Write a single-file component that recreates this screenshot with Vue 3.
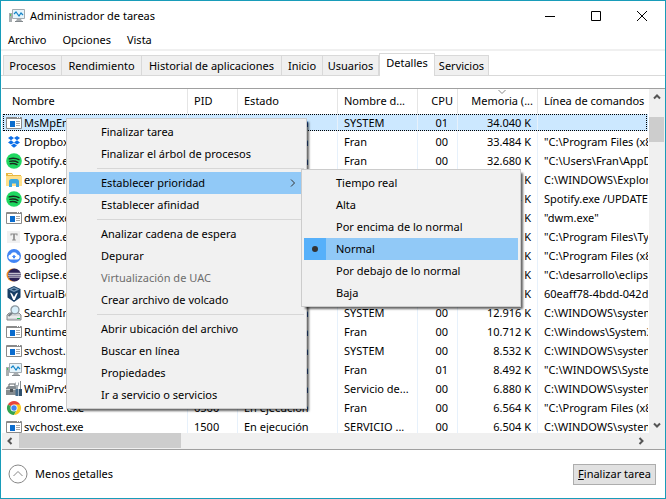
<script setup>
import { ref } from 'vue'

const tabs = ['Procesos', 'Rendimiento', 'Historial de aplicaciones', 'Inicio', 'Usuarios', 'Detalles', 'Servicios']
const activeTab = ref('Detalles')
const selected = ref(0)
const priority = ref('Normal')

const rows = [
  ['app', 'MsMpEng.exe', '2680', 'SYSTEM', '01', '34.040 K', ''],
  ['dropbox', 'Dropbox.exe', '7012', 'Fran', '00', '33.484 K', '"C:\\Program Files (x86)\\Dropbox'],
  ['spotify', 'Spotify.exe', '8124', 'Fran', '00', '32.680 K', '"C:\\Users\\Fran\\AppData\\Roaming'],
  ['folder', 'explorer.exe', '4460', 'Fran', '00', '30.120 K', 'C:\\WINDOWS\\Explorer.EXE'],
  ['spotify', 'Spotify.exe', '8316', 'Fran', '00', '27.944 K', 'Spotify.exe /UPDATE:1234'],
  ['app', 'dwm.exe', '1012', 'DWM-1', '00', '25.316 K', '"dwm.exe"'],
  ['typora', 'Typora.exe', '9240', 'Fran', '00', '22.508 K', '"C:\\Program Files\\Typora\\Typora'],
  ['drive', 'googledrivesync.exe', '7388', 'Fran', '00', '19.872 K', '"C:\\Program Files (x86)\\Google'],
  ['eclipse', 'eclipse.exe', '9904', 'Fran', '00', '17.260 K', '"C:\\desarrollo\\eclipse\\eclipse'],
  ['vbox', 'VirtualBox.exe', '9532', 'Fran', '00', '14.732 K', '60eaff78-4bdd-042d-2e72'],
  ['search', 'SearchIndexer.exe', '5216', 'SYSTEM', '00', '12.916 K', 'C:\\WINDOWS\\system32\\Search'],
  ['app', 'RuntimeBroker.exe', '4728', 'Fran', '00', '10.712 K', 'C:\\Windows\\System32\\Runtime'],
  ['app', 'svchost.exe', '1116', 'SYSTEM', '00', '8.532 K', 'C:\\WINDOWS\\system32\\svchost'],
  ['monitor', 'Taskmgr.exe', '6644', 'Fran', '01', '8.492 K', '"C:\\WINDOWS\\System32\\Taskmgr'],
  ['wmi', 'WmiPrvSE.exe', '3304', 'Servicio de...', '00', '6.880 K', 'C:\\WINDOWS\\system32\\wbem'],
  ['chrome', 'chrome.exe', '6560', 'Fran', '00', '6.564 K', '"C:\\Program Files (x86)\\Google'],
  ['app', 'svchost.exe', '1500', 'SERVICIO ...', '00', '6.504 K', 'C:\\WINDOWS\\system32\\svchost'],
].map(([icon, name, pid, user, cpu, memory, command]) => ({ icon, name, pid, user, cpu, memory, command }))

const menuGroups = [
  [{ label: 'Finalizar tarea' }, { label: 'Finalizar el árbol de procesos' }],
  [{ label: 'Establecer prioridad', open: true }, { label: 'Establecer afinidad' }],
  [
    { label: 'Analizar cadena de espera' },
    { label: 'Depurar' },
    { label: 'Virtualización de UAC', disabled: true },
    { label: 'Crear archivo de volcado' },
  ],
  [
    { label: 'Abrir ubicación del archivo' },
    { label: 'Buscar en línea' },
    { label: 'Propiedades' },
    { label: 'Ir a servicio o servicios' },
  ],
]
const priorities = ['Tiempo real', 'Alta', 'Por encima de lo normal', 'Normal', 'Por debajo de lo normal', 'Baja']
</script>

<template>
  <div class="window">
    <svg class="sprite" aria-hidden="true">
      <symbol id="i-app" viewBox="0 0 16 16">
        <path d="M.5 2.500h15v11H.5z" fill="#fff" stroke="#8a8a8a" />
        <path d="M1 2h14v2H1z" fill="#8a8a8a" />
        <path d="M11 2h1v1h-1zM13 2h1v1h-1z" fill="#fff" />
        <path d="M4 6h5v6H4z" fill="#0a6cce" />
        <path d="M10 6h4v1h-4zM10 8h4v1h-4zM10 10h4v1h-4z" fill="#a9a9a9" />
      </symbol>
      <symbol id="i-dropbox" viewBox="0 0 16 16">
        <path d="M5 2 8 4.100 5 6.300 2 4.100zM11 2l3 2.100-3 2.200-3-2.200zM5 6.300l3 2.100-3 2.200-3-2.200zM11 6.300l3 2.100-3 2.200-3-2.200zM5 11.500l3-2.100 3 2.100-3 2.200z" fill="#0c6ee8" />
      </symbol>
      <symbol id="i-spotify" viewBox="0 0 16 16">
        <circle cx="8" cy="8" r="7.800" fill="#1ed760" />
        <path d="M3.200 5.800c3.400-1 7-.7 9.800.9M3.800 8.400c2.900-.8 5.700-.5 8.100.9M4.300 10.800c2.400-.6 4.700-.3 6.700.8" fill="none" stroke="#182b1e" stroke-width="1.400" stroke-linecap="round" />
      </symbol>
      <symbol id="i-folder" viewBox="0 0 16 16">
        <path d="M0 1h6l1 2h8v3H0z" fill="#e9b63f" />
        <path d="M2 2h4v1H2z" fill="#fff5cf" />
        <path d="M0 4h16v10H0z" fill="#ffe08a" />
        <path d="M3 15V9.500Q3 7 5.500 7h5Q13 7 13 9.500V15h-3v-3.500H6V15z" fill="#3ba7e0" />
      </symbol>
      <symbol id="i-typora" viewBox="0 0 16 16">
        <path d="M1 2h13v12H1z" fill="#f1f1f1" />
        <path d="M4.500 4.500h7v2h-1v-1H8.800v5h1v1H6.200v-1h1v-5H5.500v1h-1z" fill="#888" />
      </symbol>
      <symbol id="i-drive" viewBox="0 0 16 16">
        <circle cx="8" cy="8" r="7" fill="#4285f4" />
        <path d="M5 11.500a2.500 2.500 0 0 1-.3-5 3.500 3.500 0 0 1 6.600 0 2.500 2.500 0 0 1-.3 5z" fill="#fff" />
        <path d="m8 6.800 2.200 2.200H9v1.200H7V9H5.800z" fill="#4285f4" />
      </symbol>
      <symbol id="i-eclipse" viewBox="0 0 16 16">
        <circle cx="7" cy="8" r="6.500" fill="#f28a1c" />
        <circle cx="8.500" cy="8" r="6.500" fill="#2c2255" />
        <path d="M2.500 6.300h12.300M2 8.200h13M2.500 10.100h12.300" stroke="#fff" stroke-width=".9" />
      </symbol>
      <symbol id="i-vbox" viewBox="0 0 16 16">
        <path d="m8 0 6.500 3v8.500L8 16l-6.500-4.500V3z" fill="#173e65" />
        <path d="m2.500 3.500 5.500-2.500 5.500 2.500L8 6z" fill="#7396b6" />
        <path d="m5.500 3.500 2.500-1 2.500 1-2.500 1z" fill="#173e65" />
        <path d="m4 6.500 2 1L8 11l2-3.500 2-1L8.800 14H7.200z" fill="#fff" />
      </symbol>
      <symbol id="i-search" viewBox="0 0 16 16">
        <path d="m1 10 2-2h10l2 2v5H1z" fill="#d3d6d8" stroke="#85898c" />
        <path d="M2 12h12" stroke="#fff" />
        <path d="M11 13h3v1h-3z" fill="#28b858" />
        <path d="m6.500 7.500-4 3.500" stroke="#747b81" stroke-width="2" />
        <circle cx="9" cy="4.800" r="4" fill="#d9f0fb" stroke="#8b969d" stroke-width="1.300" />
      </symbol>
      <symbol id="i-monitor" viewBox="0 0 16 16">
        <path d="M0 5h3v9H0z" fill="#a8adb0" />
        <path d="M1 6h1v2H1z" fill="#4fc35b" />
        <path d="M3.500 1.500h12v9h-12z" fill="#e5f4fb" stroke="#a2abb1" />
        <path d="m5 6 2-2 3 4 2-3 2 2" fill="none" stroke="#1584c7" stroke-width="1.200" />
        <path d="M8 11h4l1 2H7z" fill="#a8adb0" />
        <path d="M6 13h8v1H6z" fill="#83898d" />
      </symbol>
      <symbol id="i-wmi" viewBox="0 0 16 16">
        <path d="M3 5V3h6v2" fill="none" stroke="#5b6064" />
        <path d="m0 7 2-2h9l1 2v7H0z" fill="#858c90" />
        <path d="M0 8h12v1H0z" fill="#d4d8da" />
        <path d="M4 8h3v3H4z" fill="#4d5357" />
        <path d="M9 1v3l1 2v3h2V6l1-2V1l-1 1v2h-2V2z" fill="#a7afb4" />
        <path d="M9.500 8h3v7h-3z" fill="#456b8b" />
        <path d="M14 0h1v8h-1z" fill="#858c90" />
        <path d="M13 8h3v7h-3z" fill="#2f516d" />
      </symbol>
      <symbol id="i-chrome" viewBox="0 0 16 16">
        <path d="M8 8 1.900 4.500A7 7 0 0 1 14.100 4.500z" fill="#e8453c" />
        <path d="M8 8 1.900 4.500A7 7 0 0 0 8 15l3-5.300z" fill="#34a34f" />
        <path d="M8 4.500h6.100A7 7 0 0 1 8 15l3-5.300z" fill="#fbcb22" />
        <circle cx="8" cy="8" r="3.500" fill="#fff" />
        <circle cx="8" cy="8" r="2.700" fill="#4284f3" />
      </symbol>
      <symbol id="i-arrow" viewBox="0 0 8 8">
        <path d="m1 5.500 3-3 3 3" fill="none" stroke="#555" stroke-width="2" />
      </symbol>
    </svg>

    <header class="titlebar">
      <svg class="icon"><use href="#i-monitor" /></svg>
      <h1>Administrador de tareas</h1>
      <div class="controls">
        <button aria-label="Minimizar"><svg viewBox="0 0 10 10"><path d="M0 5.500h10" /></svg></button>
        <button aria-label="Maximizar"><svg viewBox="0 0 10 10"><path d="M.5.5h9v9h-9z" /></svg></button>
        <button aria-label="Cerrar"><svg viewBox="0 0 10 10"><path d="m0 0 10 10M10 0 0 10" /></svg></button>
      </div>
    </header>

    <nav class="menubar">
      <button>Archivo</button>
      <button>Opciones</button>
      <button>Vista</button>
    </nav>

    <div class="tabs" role="tablist">
      <button
        v-for="tab in tabs"
        :key="tab"
        role="tab"
        :aria-selected="tab === activeTab"
        :class="{ active: tab === activeTab }"
        @click="activeTab = tab"
      >{{ tab }}</button>
    </div>

    <main class="panel">
      <div class="viewport">
        <table>
          <colgroup>
            <col class="c-name" /><col class="c-pid" /><col class="c-state" /><col class="c-user" />
            <col class="c-cpu" /><col class="c-memory" /><col />
          </colgroup>
          <thead>
            <tr>
              <th>Nombre</th>
              <th>PID</th>
              <th>Estado</th>
              <th>Nombre d...</th>
              <th class="num">CPU</th>
              <th class="num sorted">
                <svg viewBox="0 0 8 4"><path d="m.5 0 3.500 3.500L7.500 0" /></svg>Memoria (...
              </th>
              <th class="command">Línea de comandos</th>
            </tr>
          </thead>
          <tbody>
            <tr v-for="(row, i) in rows" :key="i" :class="{ selected: i === selected }" @click="selected = i">
              <td class="name"><svg class="icon"><use :href="'#i-' + row.icon" /></svg>{{ row.name }}</td>
              <td>{{ row.pid }}</td>
              <td>En ejecución</td>
              <td>{{ row.user }}</td>
              <td class="num cpu">{{ row.cpu }}</td>
              <td class="num">{{ row.memory }}</td>
              <td class="command">{{ row.command }}</td>
            </tr>
          </tbody>
        </table>
      </div>
      <div class="scroll vertical">
        <button aria-label="Subir"><svg><use href="#i-arrow" /></svg></button>
        <div class="thumb"></div>
        <button class="down" aria-label="Bajar"><svg><use href="#i-arrow" /></svg></button>
      </div>
      <div class="scroll horizontal">
        <button class="left" aria-label="Izquierda"><svg><use href="#i-arrow" /></svg></button>
        <div class="thumb"></div>
        <button class="right" aria-label="Derecha"><svg><use href="#i-arrow" /></svg></button>
      </div>
    </main>

    <footer>
      <button class="less">
        <svg viewBox="0 0 20 20"><circle cx="10" cy="10" r="9" /><path d="m5.500 12 4.500-4.500 4.500 4.500" /></svg>
        <span>Menos <u>d</u>etalles</span>
      </button>
      <button class="end"><u>F</u>inalizar tarea</button>
    </footer>

    <div class="menu context" role="menu">
      <div v-for="(group, g) in menuGroups" :key="g" class="group">
        <button
          v-for="item in group"
          :key="item.label"
          role="menuitem"
          :disabled="item.disabled"
          :class="{ highlighted: item.open }"
        >
          <span>{{ item.label }}</span>
          <svg v-if="item.open" class="chevron" viewBox="0 0 6 8"><path d="m1 .5 3.500 3.500L1 7.500" /></svg>
        </button>
      </div>
    </div>

    <div class="menu submenu" role="menu">
      <button
        v-for="level in priorities"
        :key="level"
        role="menuitemradio"
        :aria-checked="level === priority"
        :class="{ highlighted: level === priority }"
        @click="priority = level"
      >
        <i v-if="level === priority" class="check"></i>
        <span>{{ level }}</span>
      </button>
    </div>
  </div>
</template>

<style>
body {
  margin: 0;
}
</style>

<style scoped>
* {
  box-sizing: border-box;
}
.window {
  position: relative;
  display: flex;
  flex-direction: column;
  height: 100vh;
  border: 1px solid #189cb9;
  background: #fff;
  color: #000;
  font: 11px/16px "Segoe UI", "Noto Sans", "Open Sans", sans-serif;
  overflow: hidden;
}
button {
  margin: 0;
  padding: 0;
  border: 0;
  background: none;
  color: inherit;
  font: inherit;
  white-space: nowrap;
}
svg {
  display: block;
  flex: none;
}
.sprite {
  position: absolute;
  width: 0;
  height: 0;
}
.icon {
  width: 16px;
  height: 16px;
}
.titlebar {
  display: flex;
  align-items: center;
  height: 30px;
  padding-left: 8px;
}
h1 {
  flex: 1;
  margin: 0 0 0 5px;
  font-size: 11px;
  font-weight: 400;
}
.controls {
  display: flex;
}
.controls button {
  display: flex;
  align-items: center;
  justify-content: center;
  width: 46px;
  height: 29px;
}
.controls svg {
  width: 10px;
  height: 10px;
}
.controls path {
  fill: none;
  stroke: #000;
}
.menubar {
  display: flex;
  gap: 16px;
  height: 20px;
  padding-left: 7px;
  border-bottom: 2px solid #f0f0f0;
}
.tabs {
  display: grid;
  grid-template-columns: 59px 80px 140px 41px 56px 56px 54px;
  align-items: end;
  height: 25px;
  padding-left: 2px;
  border-bottom: 1px solid #d9d9d9;
}
.tabs button {
  height: 20px;
  border: solid #d9d9d9;
  border-width: 1px 1px 0 0;
  background: #f0f0f0;
}
.tabs button:first-child {
  border-left-width: 1px;
}
.tabs .active {
  height: 23px;
  margin-bottom: -1px;
  padding-bottom: 4px;
  border-left-width: 1px;
  background: #fff;
}
.panel {
  flex: 1;
  display: grid;
  grid-template: minmax(0, 1fr) 16px / minmax(0, 1fr) 16px;
  min-height: 0;
  margin: 12px 0 0 1px;
  border: solid #a0a0a0;
  border-width: 1px 0;
  background: #f0f0f0;
}
.viewport {
  padding-right: 1px;
  overflow: hidden;
  background: #fff;
}
table {
  width: 100%;
  table-layout: fixed;
  border-collapse: separate;
  border-spacing: 0;
}
.c-name {
  width: 186px;
}
.c-pid {
  width: 50px;
}
.c-state {
  width: 100px;
}
.c-user {
  width: 80px;
}
.c-cpu {
  width: 40px;
}
.c-memory {
  width: 80px;
}
th,
td {
  height: 19px;
  padding: 0 6px;
  border-right: 1px solid #e7f1fb;
  overflow: hidden;
  text-align: left;
  text-overflow: ellipsis;
  white-space: nowrap;
  font-weight: 400;
}
th {
  position: relative;
  height: 24px;
  border-color: #e5e5e5;
}
th:first-child {
  padding-left: 10px;
}
.num {
  text-align: right;
}
th.num {
  padding: 0 4px;
}
.num.cpu {
  padding-right: 9px;
}
.command {
  padding-right: 0;
  border-right: 0;
  text-overflow: clip;
}
.sorted svg {
  position: absolute;
  top: 1px;
  left: 50%;
  width: 8px;
  height: 4px;
}
.sorted path {
  fill: none;
  stroke: #888;
}
.name {
  padding-left: 22px;
}
.name .icon {
  float: left;
  margin-left: -18px;
}
.selected {
  outline: 1px dotted #000;
  outline-offset: -2px;
}
.selected td {
  background: #cce8ff;
  box-shadow: inset 0 1px #fff, inset 0 -1px #fff;
}
.scroll {
  display: flex;
}
.scroll button {
  display: flex;
  align-items: center;
  justify-content: center;
  width: 16px;
  height: 16px;
}
.scroll svg {
  width: 8px;
  height: 8px;
}
.vertical {
  flex-direction: column;
}
.vertical .thumb {
  height: 25px;
  margin: 12px 1px auto 0;
  background: #cdcdcd;
}
.horizontal .thumb {
  width: 25%;
  margin: 0 auto 1px 1px;
  background: #cdcdcd;
}
.down svg {
  transform: rotate(180deg);
}
.left svg {
  transform: rotate(-90deg);
}
.right svg {
  transform: rotate(90deg);
}
footer {
  display: flex;
  align-items: center;
  justify-content: space-between;
  height: 48px;
  padding: 0 9px 0 7px;
}
.less {
  display: flex;
  align-items: center;
  gap: 7px;
}
.less svg {
  width: 20px;
  height: 20px;
  fill: none;
  stroke: #888;
}
.end {
  width: 83px;
  height: 21px;
  border: 1px solid #adadad;
  background: #e1e1e1;
}
.menu {
  position: absolute;
  padding: 2px;
  border: 1px solid #ccc;
  background: #f1f1f1;
  box-shadow: 3px 3px 2px -1px rgba(0, 0, 0, 0.6);
}
.context {
  top: 117px;
  left: 65px;
  width: 241px;
}
.submenu {
  top: 168px;
  left: 300px;
  width: 220px;
}
.menu button {
  display: flex;
  align-items: center;
  width: 100%;
  height: 22px;
  padding-left: 32px;
  text-align: left;
}
.menu button:disabled {
  color: #6d6d6d;
}
.menu .highlighted {
  background: #91c9f7;
}
.group + .group::before {
  content: "";
  display: block;
  height: 1px;
  margin: 3px 0 3px 28px;
  background: #d7d7d7;
}
.chevron {
  width: 6px;
  height: 8px;
  margin: 0 8px 0 auto;
  fill: none;
  stroke: #333;
}
.submenu .check {
  display: grid;
  place-items: center;
  width: 22px;
  height: 22px;
  margin: 0 10px 0 -32px;
  background: #56b0fa;
}
.check::before {
  content: "";
  width: 6px;
  height: 6px;
  border-radius: 50%;
  background: #333;
}
</style>
